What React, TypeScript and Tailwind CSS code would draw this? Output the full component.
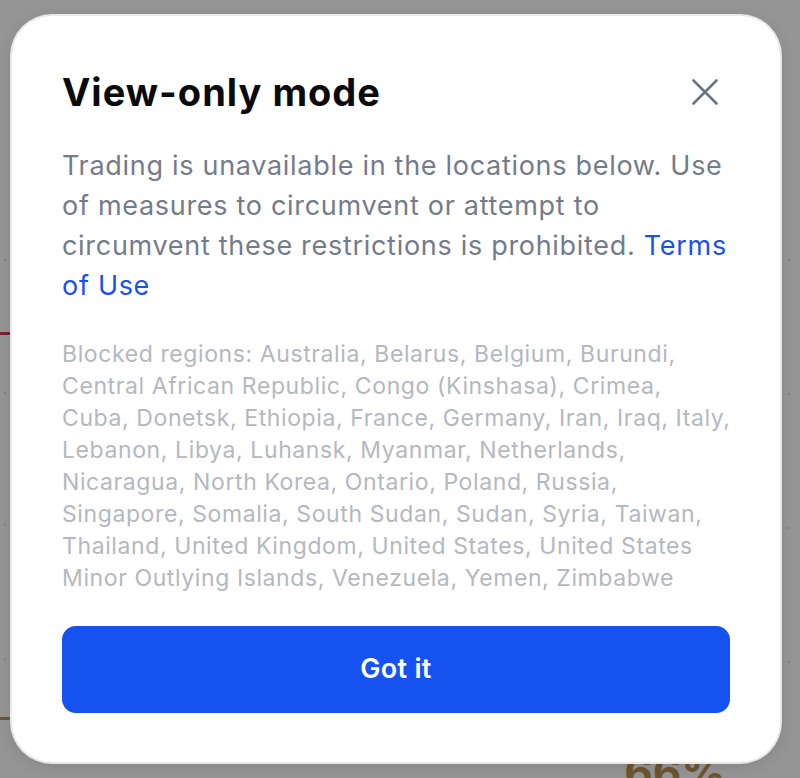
import React from "react";

function Dot() {
  return <div className="w-[2px] h-[2px] bg-[#838383]" />;
}

function DotPair() {
  return (
    <div className="flex gap-[6px]">
      <Dot />
      <Dot />
    </div>
  );
}

const regionLines = [
  "Blocked regions: Australia, Belarus, Belgium, Burundi,",
  "Central African Republic, Congo (Kinshasa), Crimea,",
  "Cuba, Donetsk, Ethiopia, France, Germany, Iran, Iraq, Italy,",
  "Lebanon, Libya, Luhansk, Myanmar, Netherlands,",
  "Nicaragua, North Korea, Ontario, Poland, Russia,",
  "Singapore, Somalia, South Sudan, Sudan, Syria, Taiwan,",
  "Thailand, United Kingdom, United States, United States",
  "Minor Outlying Islands, Venezuela, Yemen, Zimbabwe",
];

export default function App() {
  return (
    <div className="relative w-[800px] h-[778px] overflow-hidden bg-[#959595] font-['Inter','Noto_Sans',sans-serif]">
      {/* dimmed page content behind the overlay */}
      <div className="absolute inset-0 flex justify-between">
        <div className="flex flex-col w-[14px] pt-[259px]">
          <div className="ml-[4px]"><Dot /></div>
          <div className="mt-[71px] h-[3px] bg-[#7a2038]" />
          <div className="ml-[4px] mt-[57px]"><Dot /></div>
          <div className="ml-[4px] mt-[130px]"><Dot /></div>
          <div className="ml-[4px] mt-[132px]"><Dot /></div>
          <div className="mt-[57px] h-[3px] bg-[#6e5530]" />
        </div>
        <div className="flex flex-col items-end justify-between">
          <div className="flex flex-col gap-[132px] pt-[259px] pr-[10px]">
            <DotPair />
            <DotPair />
            <DotPair />
            <DotPair />
          </div>
          <div className="pr-[74px] text-[44px] leading-[40px] font-bold text-[#6e5530] translate-y-[14px]">66%</div>
        </div>
      </div>

      <div className="relative ml-[12px] mt-[16px] w-[768px] h-[746px] bg-white rounded-[40px] shadow-[0_0_0_2px_rgba(232,232,232,1),0_4px_16px_rgba(0,0,0,0.12)] px-[50px] pt-[54px] pb-[49px] flex flex-col">
        <div className="flex items-center justify-between">
          <h1 className="text-[38px] leading-[44px] font-bold text-[#0a0b0d] tracking-[1px]">View-only mode</h1>
          <svg width="26" height="26" viewBox="0 0 26 26" className="mr-[12px]">
            <path d="M1.5 1.5 L24.5 24.5 M24.5 1.5 L1.5 24.5" stroke="#6b7483" strokeWidth="2.6" strokeLinecap="round" fill="none" />
          </svg>
        </div>
        <p className="mt-[32px] text-[27px] leading-[40px] tracking-[0.7px] text-[#747b8a]">
          Trading is unavailable in the locations below. Use of measures to circumvent or attempt to circumvent these restrictions is prohibited.{" "}
          <span className="text-[#1652f0]">Terms of Use</span>
        </p>
        <div className="mt-[32px] flex flex-col text-[23px] leading-[32px] tracking-[0.6px] text-[#b3b8c1]">
          {regionLines.map((l) => (
            <span key={l} className="whitespace-nowrap">{l}</span>
          ))}
        </div>
        <button className="mt-auto h-[87px] w-full rounded-[14px] bg-[#1652f0] text-white text-[27px] font-semibold tracking-[0.3px]">
          Got it
        </button>
      </div>
    </div>
  );
}
